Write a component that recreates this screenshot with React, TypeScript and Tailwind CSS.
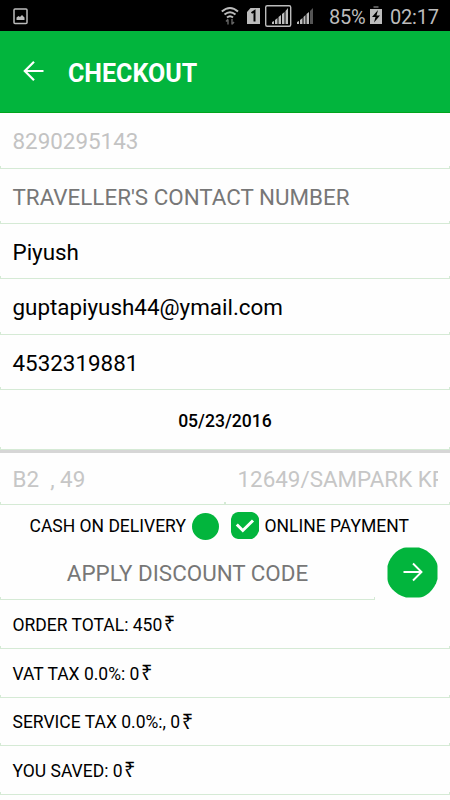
import React from "react";

interface RowProps {
  children: React.ReactNode;
  className?: string;
}

// underlined input with the small upward ticks on both ends
const Field: React.FC<RowProps> = ({ children, className = "" }) => {
  return (
    <div className={`flex flex-col justify-between shrink-0 ${className}`}>
      <div className="flex flex-1 items-center px-[12.500px] pt-[5.500px] text-[22.400px] whitespace-nowrap">{children}</div>
      <div className="h-[3px] border-x border-b border-[#d5ead5]" />
    </div>
  );
};

interface AmountProps {
  label: string;
  className: string;
}

const Amount: React.FC<AmountProps> = ({ label, className }) => {
  return (
    <Field className={className}>
      <span className="-mt-[2px] text-[17.500px] leading-5">{label}</span>
      <span className="ml-[1.500px] -mt-[3px] font-['Noto_Sans',sans-serif] text-[20px] leading-5">₹</span>
    </Field>
  );
};

const StatusBar: React.FC = () => {
  return (
    <div className="flex h-[31px] shrink-0 items-center bg-black text-[#bcbcbc]">
      <svg className="ml-[13px] mt-px" width="16" height="17" viewBox="0 0 16 17" fill="none">
        <rect x="1" y="1" width="13" height="14.500" rx="1" stroke="currentColor" strokeWidth="1.500" />
        <path d="M3.500 12V9.500l2-1.500 1.500 1L9 7l2.500 2.500V12z" fill="currentColor" />
      </svg>
      <svg className="ml-auto" width="94" height="24" viewBox="0 0 94 24" fill="none">
        <g stroke="currentColor" strokeWidth="2">
          <path d="M.8 7.500Q9 .5 17 7.500M3.500 10.500Q9 6 14.500 10.500M6 13.500Q9 11 12 13.500" />
        </g>
        <path d="M7 20.500v-5M5 17.500l2-2.200M11 15v5.500M13 18l-2 2.200" stroke="#666" strokeWidth="1.400" />
        <path d="M29.500 4H39v16H26V8z" fill="currentColor" />
        <path d="M30.500 9l3-2v10.500" stroke="#000" strokeWidth="2" />
        <rect x="44.700" y="1.700" width="25" height="20.600" rx="1.500" stroke="currentColor" strokeWidth="1.400" />
        <path
          d="M51 20v-2l2-1v3zM54 20v-4l2.500-2v6zM57.500 20v-7l2.500-2v9zM61 20V10l2.500-2v12zM64.500 20V7L67 4v16z"
          fill="currentColor"
        />
        <path d="M76 20v-2l2-1v3zM79 20v-4l2.500-2v6zM82.500 20v-7l2-2v9zM85.500 20V10l2.500-2v12z" fill="currentColor" />
        <path d="M89 20V7l3-3v16z" fill="#555" />
      </svg>
      <span className="ml-[14px] mt-[2px] w-[38px] text-[20px] tracking-[-0.300px]">85%</span>
      <svg className="ml-[3px]" width="12" height="19" viewBox="0 0 12 19">
        <path d="M3.500 0h5v2h-5z" fill="#555" />
        <path d="M0 3h12v15H0z" fill="currentColor" />
        <path d="M8 4L2 11h3.500L4 16.500l6-7H6.500z" fill="#000" />
      </svg>
      <span className="ml-[8px] mr-[11px] mt-[2px] w-[49px] text-[20px] tracking-[-0.200px]">02:17</span>
    </div>
  );
};

const App: React.FC = () => {
  return (
    <div className="flex h-[800px] w-[450px] flex-col overflow-hidden bg-[#fefefe] font-[Roboto,sans-serif] text-black">
      <StatusBar />

      <header className="flex h-[82px] shrink-0 items-center border-b border-[#00a51d] bg-[#02b53d] text-white">
        <svg className="ml-[23px] -mt-px" width="22" height="22" viewBox="0 0 22 22" fill="none" stroke="currentColor" strokeWidth="2.200">
          <path d="M20.500 11H2M11 1.800L1.800 11l9.200 9.200" />
        </svg>
        <h1 className="ml-[23px] mt-[4px] text-[25px] font-bold">CHECKOUT</h1>
      </header>

      <Field className="h-[56px] text-[#c3c3c3]">8290295143</Field>
      <Field className="h-[55px] text-[#777777]">TRAVELLER&apos;S CONTACT NUMBER</Field>
      <Field className="h-[55px]">Piyush</Field>
      <Field className="h-[56px]">guptapiyush44@ymail.com</Field>
      <Field className="h-[55px]">4532319881</Field>

      <Field className="h-[60px]">
        <span className="w-full text-center text-[17.600px] font-medium">05/23/2016</span>
      </Field>
      <div className="h-[3px] shrink-0 bg-[#d6d6d6]" />

      {/* seat and train, both read-only */}
      <div className="flex shrink-0 text-[#c6c6c6]">
        <Field className="h-[52px] w-[225px]">
          <span className="whitespace-pre">B2  , 49</span>
        </Field>
        <Field className="h-[52px] w-[225px]">
          <span className="w-[201px] overflow-hidden">12649/SAMPARK KR</span>
        </Field>
      </div>

      <div className="flex h-[41px] shrink-0 items-center pl-[29.500px] text-[17.500px]">
        <span className="mt-[2px] w-[156px] whitespace-nowrap">CASH ON DELIVERY</span>
        <span className="ml-[6.500px] mt-px size-[27px] rounded-full bg-[#02b53d]" />
        <svg className="ml-[12px]" width="28" height="27" viewBox="0 0 28 27" fill="none">
          <path d="M7 0h14Q28 2 28 8v11Q26 25 21 27H7Q1 26 0 20V7Q1 1 7 0z" fill="#02b53d" />
          <path d="M5.800 12.500l6 6L22 8.500" stroke="#fff" strokeWidth="3" />
        </svg>
        <span className="ml-[5.500px] mt-[2px] whitespace-nowrap">ONLINE PAYMENT</span>
      </div>

      <div className="flex h-[54px] shrink-0">
        <Field className="w-[375px] text-[#777777]">
          <span className="w-full text-center">APPLY DISCOUNT CODE</span>
        </Field>
        <svg className="ml-[12px] mt-px" width="51" height="51" viewBox="0 0 51 51" fill="none">
          <path
            d="M19 .5h13C38 2 42 5 45.500 9 48.500 13 50.500 16 50.500 19v13C49 38 46 42 42 46c-4 3-7 4.500-10 4.500H19C13 49 9 46 5 42 2 38 .5 35 .5 32V19C2 13 5 9 9 5c4-3 7-4.500 10-4.500z"
            fill="#02b53d"
          />
          <path d="M16.500 25h18M26 16.500l8.500 8.500-8.500 8.500" stroke="#fff" strokeWidth="1.900" />
        </svg>
      </div>

      <Amount label="ORDER TOTAL: 450" className="h-[49px]" />
      <Amount label="VAT TAX 0.0%: 0" className="h-[49px]" />
      <Amount label="SERVICE TAX 0.0%:, 0" className="h-[48px]" />
      <Amount label="YOU SAVED: 0" className="h-[49px]" />
    </div>
  );
};

export default App;
